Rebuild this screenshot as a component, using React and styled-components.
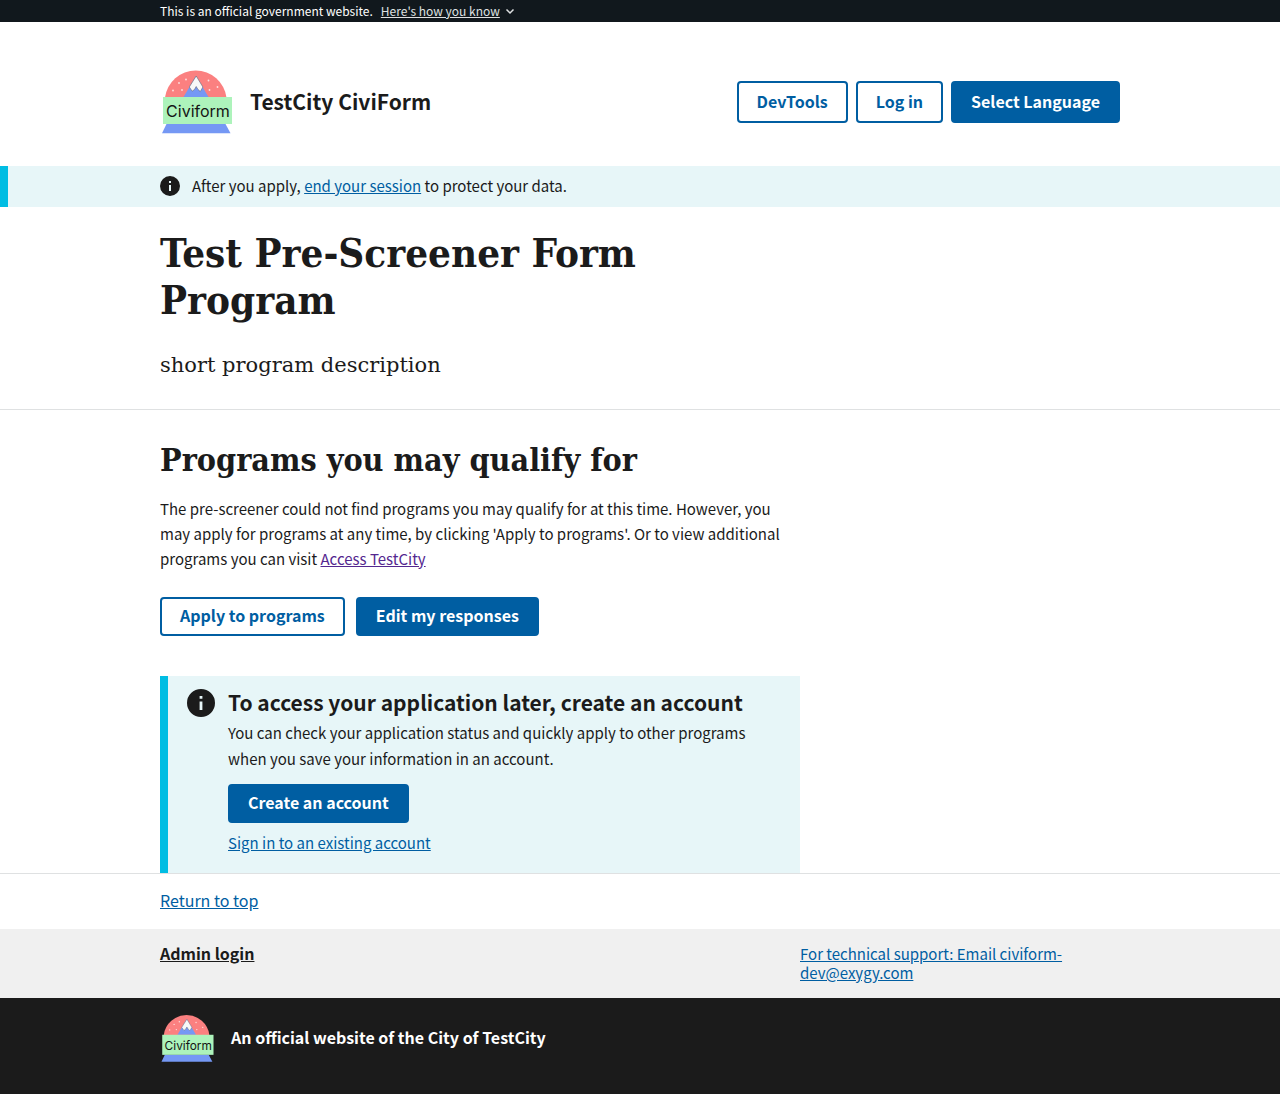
import React from "react";
import styled, { createGlobalStyle, css } from "styled-components";

const color = {
  ink: "#1b1b1b",
  primary: "#005ea2",
  visited: "#54278f",
  info: "#00bde3",
  infoLight: "#e7f6f8",
  rule: "#dfe1e2",
  footer: "#f0f0f0",
  banner: "#11181d",
};

const sans = `"Noto Sans CJK SC", "Noto Sans", sans-serif`;
const serif = `"DejaVu Serif Condensed", "DejaVu Serif", serif`;
const wideSerif = `"DejaVu Serif", serif`;

const GlobalStyle = createGlobalStyle`
  *, *::before, *::after { box-sizing: border-box; }
  body {
    margin: 0;
    background: #fff;
    color: ${color.ink};
    font-family: ${sans};
    font-size: 15px;
    line-height: 25px;
  }
  h1, h2, h3, p { margin: 0; }
`;

const Container = styled.div`
  max-width: 1024px;
  margin: 0 auto;
  padding: 0 32px;
`;

const Banner = styled.div`
  background: ${color.banner};
  color: #fff;
  font-size: 12px;
  line-height: 22px;
`;

const BannerRow = styled(Container)`
  display: flex;
  gap: 8px;
`;

const BannerToggle = styled.button`
  display: flex;
  align-items: center;
  gap: 4px;
  padding: 0;
  border: 0;
  background: none;
  color: #dfe1e2;
  font: inherit;
  cursor: pointer;

  span { text-decoration: underline; }
`;

const HeaderRow = styled(Container)`
  display: flex;
  align-items: center;
  justify-content: space-between;
  padding-top: 46px;
  padding-bottom: 30px;
`;

const Brand = styled.div`
  display: flex;
  align-items: center;
  gap: 16px;
  font-size: 21px;
  font-weight: 700;

  span { padding-bottom: 2px; }
`;

const Nav = styled.nav`
  display: flex;
  gap: 8px;
`;

const Button = styled.button`
  height: ${(p) => (p.$tall ? 42 : 39)}px;
  padding: 0 18px 3px;
  border: 2px solid ${color.primary};
  border-radius: 4px;
  background: ${(p) => (p.$outline ? "#fff" : color.primary)};
  color: ${(p) => (p.$outline ? color.primary : "#fff")};
  font-family: inherit;
  font-size: 16px;
  font-weight: 700;
  line-height: 16px;
  white-space: nowrap;
  cursor: pointer;
`;

const Link = styled.a`
  color: ${(p) => (p.$visited ? color.visited : color.primary)};
  text-decoration: underline;
`;

const infoPanel = css`
  background: ${color.infoLight};
  border-left: 8px solid ${color.info};
`;

const SessionNotice = styled.section`
  ${infoPanel}
  padding-right: 8px;
`;

const NoticeRow = styled(Container)`
  display: flex;
  align-items: center;
  gap: 12px;
  padding-top: 7px;
  padding-bottom: 9px;
`;

const Intro = styled.section`
  padding: 22px 0 26px;
  border-bottom: 1px solid ${color.rule};
`;

const Column = styled.div`
  max-width: 640px;
`;

const Title = styled.h1`
  font-family: ${serif};
  font-size: 40px;
  line-height: 47px;
`;

const Lead = styled.p`
  margin-top: 25px;
  font-family: ${wideSerif};
  font-size: 21px;
  line-height: 35px;
`;

const Heading = styled.h2`
  margin: 30px 0 16px;
  font-family: ${serif};
  font-size: 32px;
  line-height: 40px;
`;

const Actions = styled.div`
  display: flex;
  gap: 11px;
  margin: 26px 0 40px;
`;

const AccountAlert = styled.section`
  ${infoPanel}
  display: flex;
  gap: 13px;
  padding: 13px 20px 17px 19px;
`;

const AlertBody = styled.div`
  line-height: 26px;

  p { margin: 5px 0 12px; }
`;

const AlertTitle = styled.h3`
  font-size: 21px;
  line-height: 26px;
`;

const AlertLink = styled.div`
  margin-top: 7px;
`;

const ReturnBar = styled.div`
  padding: 14px 0 16px;
  border-top: 1px solid ${color.rule};
  font-size: 16px;
`;

const SupportBar = styled.div`
  background: ${color.footer};
  line-height: 19px;
  padding: 15px 0 16px;
`;

const SupportRow = styled(Container)`
  display: grid;
  grid-template-columns: 2fr 1fr;
`;

const AdminLink = styled(Link)`
  color: ${color.ink};
  font-size: 16px;
  font-weight: 700;
`;

const Identifier = styled.div`
  background: ${color.ink};
  color: #fff;
  font-size: 16px;
  font-weight: 700;
  padding: 14px 0 29px;
`;

const IdentifierRow = styled(Container)`
  display: flex;
  align-items: center;
  gap: 16px;

  span { padding-bottom: 2px; }
`;

const Drawing = styled.svg`
  display: block;
  flex: none;
`;

const flakes = [
  [19, 15], [26, 11.5], [13, 22.5], [22, 22], [48.5, 12.5], [49.5, 22], [57.5, 19],
];

function Logo({ width, height }) {
  return (
    <Drawing width={width} height={height} viewBox="0 0 74 68" role="img" aria-label="CiviForm logo">
      <path d="M5 29.500A31 31 0 0 1 66.500 29.500Z" fill="#fb8080" />
      {flakes.map(([x, y]) => (
        <circle key={`${x}-${y}`} cx={x} cy={y} r="0.9" fill="#fde0e0" />
      ))}
      <path d="M36 8 48.500 29H23.500Z" fill="#7598f4" />
      <path
        d="M36.200 8 42.900 19 40.300 23.500 38 21.500 36.200 18.500 34.500 21.500 32.200 23.200 29.300 19Z"
        fill="#f8f8f8"
        stroke="#626475"
        strokeWidth="0.6"
        strokeLinejoin="round"
      />
      <path d="M6.500 56H65.500L70.500 65.200H2Z" fill="#7598f4" />
      <rect x="3" y="29" width="69" height="27" fill="#adf3bb" />
      <text
        x="38"
        y="49"
        textAnchor="middle"
        fontFamily="Inter, sans-serif"
        fontSize="16"
        fontWeight="400"
        fill="#151515"
      >
        Civiform
      </text>
    </Drawing>
  );
}

function InfoIcon({ size }) {
  return (
    <Drawing width={size} height={size} viewBox="2 2 20 20" aria-hidden="true">
      <path
        fill={color.ink}
        d="M12 2a10 10 0 1 0 0 20 10 10 0 0 0 0-20zm1 15h-2v-6h2v6zm0-8h-2V7h2v2z"
      />
    </Drawing>
  );
}

export default function App() {
  return (
    <>
      <GlobalStyle />
      <Banner id="top">
        <BannerRow>
          <span>This is an official government website.</span>
          <BannerToggle type="button">
            <span>Here's how you know</span>
            <svg width="12" height="12" viewBox="0 0 12 12" aria-hidden="true">
              <path d="M2.500 4.500 6 8l3.500-3.500" fill="none" stroke="currentColor" strokeWidth="1.500" />
            </svg>
          </BannerToggle>
        </BannerRow>
      </Banner>
      <header>
        <HeaderRow>
          <Brand>
            <Logo width={74} height={68} />
            <span>TestCity CiviForm</span>
          </Brand>
          <Nav>
            <Button type="button" $outline $tall>DevTools</Button>
            <Button type="button" $outline $tall>Log in</Button>
            <Button type="button" $tall>Select Language</Button>
          </Nav>
        </HeaderRow>
      </header>
      <SessionNotice>
        <NoticeRow>
          <InfoIcon size={20} />
          <p>
            After you apply, <Link href="#session">end your session</Link> to protect your data.
          </p>
        </NoticeRow>
      </SessionNotice>
      <main>
        <Intro>
          <Container>
            <Column>
              <Title>Test Pre-Screener Form Program</Title>
              <Lead>short program description</Lead>
            </Column>
          </Container>
        </Intro>
        <Container>
          <Column>
            <Heading>Programs you may qualify for</Heading>
            <p>
              The pre-screener could not find programs you may qualify for at this time. However, you
              may apply for programs at any time, by clicking 'Apply to programs'. Or to view
              additional programs you can visit <Link href="#access" $visited>Access TestCity</Link>
            </p>
            <Actions>
              <Button type="button" $outline>Apply to programs</Button>
              <Button type="button">Edit my responses</Button>
            </Actions>
            <AccountAlert>
              <InfoIcon size={28} />
              <AlertBody>
                <AlertTitle>To access your application later, create an account</AlertTitle>
                <p>
                  You can check your application status and quickly apply to other programs when you
                  save your information in an account.
                </p>
                <Button type="button">Create an account</Button>
                <AlertLink>
                  <Link href="#signin">Sign in to an existing account</Link>
                </AlertLink>
              </AlertBody>
            </AccountAlert>
          </Column>
        </Container>
      </main>
      <footer>
        <ReturnBar>
          <Container>
            <Link href="#top">Return to top</Link>
          </Container>
        </ReturnBar>
        <SupportBar>
          <SupportRow>
            <div>
              <AdminLink href="#admin">Admin login</AdminLink>
            </div>
            <div>
              <Link href="mailto:civiform-dev@exygy.com">
                For technical support: Email civiform-dev@exygy.com
              </Link>
            </div>
          </SupportRow>
        </SupportBar>
        <Identifier>
          <IdentifierRow>
            <Logo width={55} height={53} />
            <span>An official website of the City of TestCity</span>
          </IdentifierRow>
        </Identifier>
      </footer>
    </>
  );
}
